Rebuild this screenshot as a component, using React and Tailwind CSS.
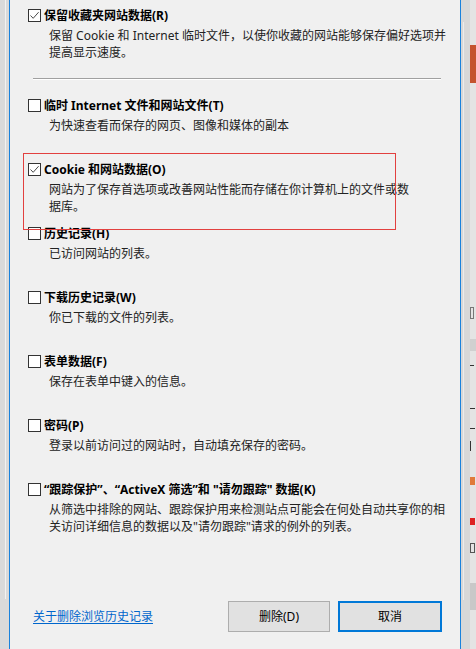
function Box({ checked }) {
  return (
    <span className="flex h-[13px] w-[13px] shrink-0 items-center justify-center border border-[#333] bg-white">
      {checked && (
        <svg width="11" height="11" viewBox="0 0 11 11">
          <path d="M1.5 5.5 L4.2 8.3 L9.6 2.2" fill="none" stroke="#4a4a4a" strokeWidth="1" />
        </svg>
      )}
    </span>
  );
}

function Option({ checked, label, lines, className = "" }) {
  return (
    <div className={className}>
      <div className="flex h-[17px] items-center gap-[3px] pl-[18px]">
        <Box checked={checked} />
        <span className="whitespace-nowrap text-[12px] font-bold leading-[17px] text-black">{label}</span>
      </div>
      <div className="mt-[3px] pl-[39px] text-[12px] leading-[17px] text-[#222]">
        {lines.map((l) => (
          <div key={l} className="whitespace-nowrap">{l}</div>
        ))}
      </div>
    </div>
  );
}

const options = [
  {
    label: "临时 Internet 文件和网站文件(T)",
    lines: ["为快速查看而保存的网页、图像和媒体的副本"],
  },
  {
    checked: true,
    label: "Cookie 和网站数据(O)",
    lines: ["网站为了保存首选项或改善网站性能而存储在你计算机上的文件或数", "据库。"],
  },
  { label: "历史记录(H)", lines: ["已访问网站的列表。"] },
  { label: "下载历史记录(W)", lines: ["你已下载的文件的列表。"] },
  { label: "表单数据(F)", lines: ["保存在表单中键入的信息。"] },
  { label: "密码(P)", lines: ["登录以前访问过的网站时，自动填充保存的密码。"] },
  {
    label: "“跟踪保护”、“ActiveX 筛选”和 \"请勿跟踪\" 数据(K)",
    lines: [
      "从筛选中排除的网站、跟踪保护用来检测站点可能会在何处自动共享你的相",
      "关访问详细信息的数据以及\"请勿跟踪\"请求的例外的列表。",
    ],
  },
];

export default function App() {
  return (
    <div className="relative flex h-[649px] w-[476px] overflow-hidden bg-[#f0f0f0] font-['Noto_Sans','Noto_Sans_CJK_SC',sans-serif]">
      {/* window behind, left edge */}
      <div className="flex w-[9px] shrink-0 bg-[#dadada] pl-[5px]">
        <div className="h-[599px] w-px bg-[#f2f2f2]" />
      </div>

      {/* dialog */}
      <div className="flex w-[452px] shrink-0 flex-col border-x border-[#1a82dc] bg-[#f0f0f0] pt-[7px]">
        <Option
          checked
          label="保留收藏夹网站数据(R)"
          lines={["保留 Cookie 和 Internet 临时文件，以使你收藏的网站能够保存偏好选项并", "提高显示速度。"]}
        />
        <div className="ml-[23px] mt-[17px] w-[408px] border-t border-b border-t-[#a0a0a0] border-b-white" />
        <div className="mt-[17px] flex flex-col">
          {options.map((o) => (
            <Option key={o.label} className="h-16" {...o} />
          ))}
        </div>
        <div className="mt-[56px] flex h-[31px] items-center pl-[23px] pr-[18px]">
          <span className="text-[12px] leading-[17px] text-[#0066cc] underline underline-offset-2">关于删除浏览历史记录</span>
          <button className="ml-auto h-[31px] w-[102px] border border-[#adadad] bg-[#e1e1e1] text-[12px] text-black">删除(D)</button>
          <button className="ml-[8px] h-[31px] w-[104px] border-2 border-[#0078d7] bg-[#e1e1e1] text-[12px] text-black">取消</button>
        </div>
      </div>

      {/* window behind, right edge */}
      <div className="flex flex-1 bg-[#d8d8d8]">
        <div className="ml-[2px] mt-[22px] h-[578px] w-px bg-[#ececec]" />
        <div className="ml-[6px] flex flex-1 flex-col bg-[#e4e4e4]">
          <div className="mt-[45px] h-[38px] bg-[#c4532f]" />
          <div className="mt-[224px] h-[12px] w-[4px] border border-[#777]" />
          <div className="mt-[20px] h-[12px] bg-[#d0d0d0]" />
          <div className="mt-[14px] h-px w-[4px] bg-[#333]" />
          <div className="mt-[42px] h-[6px] w-[5px] border-t border-[#333]" />
          <div className="mt-[14px] h-px w-[5px] bg-[#333]" />
          <div className="mt-[12px] h-[10px] w-[4px] border-l border-[#333]" />
          <div className="mt-[26px] h-[8px] w-[5px] bg-[#e07a3a]" />
          <div className="mt-[33px] h-[7px] w-[5px] bg-[#d22]" />
          <div className="mt-[18px] h-[10px] w-[5px] border border-[#555]" />
          <div className="mt-[30px] h-[27px] bg-[#c8c8c8]" />
        </div>
      </div>

      {/* annotation */}
      <div className="pointer-events-none absolute left-[23px] top-[153px] h-[77px] w-[373px] border border-[#e2403f]" />
    </div>
  );
}
